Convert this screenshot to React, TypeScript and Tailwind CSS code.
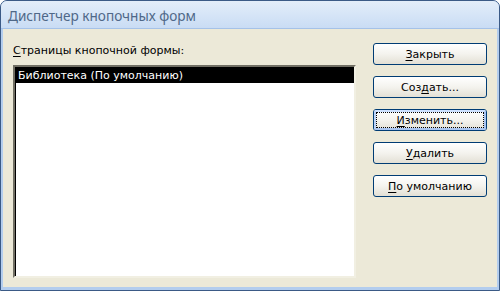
import type { ReactNode } from "react";

const font = { fontFamily: '"DejaVu Sans", Tahoma, sans-serif' };

function Btn({ children, focused = false }: { children: ReactNode; focused?: boolean }) {
  return (
    <button
      className="h-[22px] w-[114px] rounded-[3px] border border-[#003c74] bg-gradient-to-b from-[#ffffff] via-[#f4f3ee] to-[#e3e0d5] p-0 text-[11px] text-black"
      style={font}
    >
      {focused ? (
        <div className="flex h-full w-full items-center justify-center rounded-[2px] border-2 border-[#a9c5f1] border-t-[#cde1ff] border-l-[#bcd3f8]">
          <div className="flex h-full w-full items-center justify-center border border-dotted border-black leading-none">
            {children}
          </div>
        </div>
      ) : (
        <div className="flex h-full w-full items-center justify-center leading-none">{children}</div>
      )}
    </button>
  );
}

export default function App() {
  return (
    <div className="flex h-[291px] w-[500px] flex-col overflow-hidden rounded-t-[7px] border border-[#3b5a86] bg-[#b3cdee]">
      <div className="flex h-[28px] shrink-0 items-center bg-gradient-to-b from-[#e3edf9] via-[#d6e5f7] to-[#c9dcf4] pl-[7px] pt-[2px] border-b border-[#a5c2e8]">
        <span
          className="text-[13.6px] leading-none text-[#4f6888]"
          style={{ fontFamily: '"Noto Sans", "Segoe UI", sans-serif' }}
        >
          Диспетчер кнопочных форм
        </span>
      </div>
      <div className="mx-[2px] mb-[3px] flex flex-1 bg-[#ece9d8] pl-[10px] pt-[14px]">
        <div className="flex flex-col">
          <div className="h-[22px] pt-[1px] text-[11px] leading-[14px] text-black" style={font}>
            <span className="underline underline-offset-2">С</span>траницы кнопочной формы:
          </div>
          <div className="h-[213px] w-[343px] border-2 border-t-[#716f64] border-l-[#716f64] border-b-[#f1efe2] border-r-[#f1efe2] bg-white">
            <div className="h-full w-full border-t border-l border-[#000000] border-b-0 border-r-0">
              <div className="flex h-[15px] items-center bg-black pl-[2px] text-[11px] leading-none text-white" style={font}>
                Библиотека (По умолчанию)
              </div>
            </div>
          </div>
        </div>
        <div className="ml-[17px] flex flex-col gap-[11px]">
          <Btn>
            <span className="underline underline-offset-2">З</span>акрыть
          </Btn>
          <Btn>
            Соз<span className="underline underline-offset-2">д</span>ать...
          </Btn>
          <Btn focused>
            <span className="underline underline-offset-2">И</span>зменить...
          </Btn>
          <Btn>
            <span className="underline underline-offset-2">У</span>далить
          </Btn>
          <Btn>
            <span className="underline underline-offset-2">П</span>о умолчанию
          </Btn>
        </div>
      </div>
    </div>
  );
}
